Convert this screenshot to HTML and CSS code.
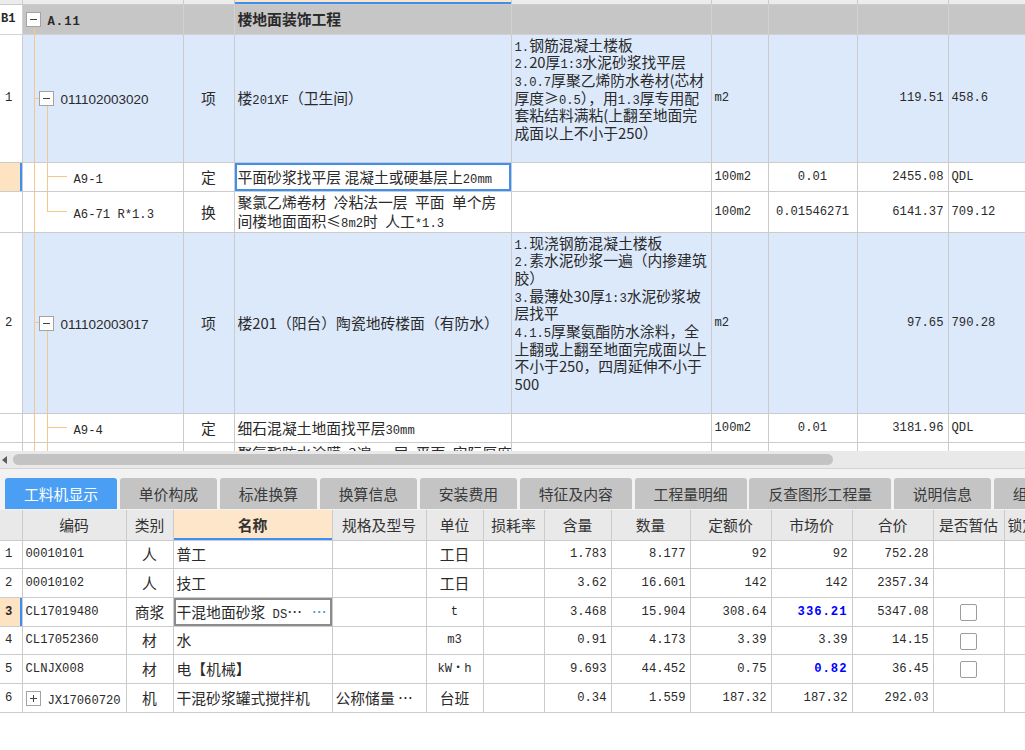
FILE: index.html
```html
<!DOCTYPE html>
<html lang="zh-CN">
<head>
<meta charset="utf-8">
<title>楼地面装饰工程</title>
<link rel="stylesheet" href="styles.css">
</head>
<body>
<div class="top">
<table class="grid tg">
<colgroup><col class="c1"><col class="c2"><col class="c3"><col class="c4"><col class="c5"><col class="c6"><col class="c7"><col class="c8"><col class="c9"><col class="c10"></colgroup>
<tr class="hdr"><td></td><td></td><td></td><td class="hsel"></td><td></td><td></td><td></td><td></td><td></td><td></td></tr>
<tr class="gray h30"><td class="num m b">B1</td><td class="code tb1"><span class="box"></span><span class="m b ls">A.11</span></td><td></td><td class="b">楼地面装饰工程</td><td></td><td></td><td></td><td></td><td></td><td></td></tr>
<tr class="blue h128"><td class="num m">1</td><td class="code titem"><span class="box"></span><span class="qd">011102003020</span></td><td class="c">项</td><td>楼<span class="m">201XF</span>（卫生间）</td><td class="feat"><span class="m">1.</span>钢筋混凝土楼板<br><span class="m">2.</span>20厚<span class="m">1:3</span>水泥砂浆找平层<br><span class="m">3.0.7</span>厚聚乙烯防水卷材(芯材<br>厚度≥<span class="m">0.5</span>），用<span class="m">1.3</span>厚专用配<br>套粘结料满粘(上翻至地面完<br>成面以上不小于250）</td><td class="m">m2</td><td></td><td class="m r">119.51</td><td class="m">458.6</td><td></td></tr>
<tr class="h29"><td class="num selnum"></td><td class="code tchild"><span class="m">A9-1</span></td><td class="c">定</td><td class="selcell">平面砂浆找平层 混凝土或硬基层上<span class="m">20mm</span></td><td></td><td class="m">100m2</td><td class="m c">0.01</td><td class="m r">2455.08</td><td class="m">QDL</td><td></td></tr>
<tr class="h41"><td class="num"></td><td class="code tlast"><span class="m">A6-71 R*1.3</span></td><td class="c">换</td><td class="two">聚氯乙烯卷材<span class="m"> </span>冷粘法一层<span class="m"> </span>平面<span class="m">  </span>单个房<br>间楼地面面积≤<span class="m">8m2</span>时<span class="m"> </span>人工<span class="m">*1.3</span></td><td></td><td class="m">100m2</td><td class="m c">0.01546271</td><td class="m r">6141.37</td><td class="m">709.12</td><td></td></tr>
<tr class="blue h181"><td class="num m">2</td><td class="code titem"><span class="box"></span><span class="qd">011102003017</span></td><td class="c">项</td><td>楼201（阳台）陶瓷地砖楼面（有防水）</td><td class="feat"><span class="m">1.</span>现浇钢筋混凝土楼板<br><span class="m">2.</span>素水泥砂浆一遍（内掺建筑<br>胶）<br><span class="m">3.</span>最薄处30厚<span class="m">1:3</span>水泥砂浆坡<br>层找平<br><span class="m">4.1.5</span>厚聚氨酯防水涂料，全<br>上翻或上翻至地面完成面以上<br>不小于250，四周延伸不小于<br>500</td><td class="m">m2</td><td></td><td class="m r">97.65</td><td class="m">790.28</td><td></td></tr>
<tr class="h29"><td class="num"></td><td class="code tchild"><span class="m">A9-4</span></td><td class="c">定</td><td>细石混凝土地面找平层<span class="m">30mm</span></td><td></td><td class="m">100m2</td><td class="m c">0.01</td><td class="m r">3181.96</td><td class="m">QDL</td><td></td></tr>
<tr class="h41"><td class="num"></td><td class="code tchild"><span class="m">A6-25 + A6-27</span></td><td class="c">换</td><td class="two">聚氨酯防水涂膜<span class="m"> </span>2遍<span class="m"> </span>一层<span class="m"> </span>平面<span class="m">  </span>实际厚度<br><span class="m">1.5mm</span></td><td></td><td class="m">100m2</td><td class="m c">0.01</td><td class="m r">4215.66</td><td class="m">QDL</td><td></td></tr>
</table>
</div>

<div class="hscroll"><span class="arrow"></span><span class="thumb"></span></div>

<div class="tabs">
<div class="tab on">工料机显示</div>
<div class="tab">单价构成</div>
<div class="tab">标准换算</div>
<div class="tab">换算信息</div>
<div class="tab">安装费用</div>
<div class="tab">特征及内容</div>
<div class="tab">工程量明细</div>
<div class="tab">反查图形工程量</div>
<div class="tab">说明信息</div>
<div class="tab">组价方案</div>
</div>

<div class="bottom">
<table class="grid bt">
<colgroup><col class="d1"><col class="d2"><col class="d3"><col class="d4"><col class="d5"><col class="d6"><col class="d7"><col class="d8"><col class="d9"><col class="d10"><col class="d11"><col class="d12"><col class="d13"><col class="d14"></colgroup>
<tr class="bh"><td></td><td>编码</td><td>类别</td><td class="hname">名称</td><td>规格及型号</td><td>单位</td><td>损耗率</td><td>含量</td><td>数量</td><td>定额价</td><td>市场价</td><td>合价</td><td>是否暂估</td><td class="l">锁定数量</td></tr>
<tr class="h28"><td class="num m">1</td><td class="m">00010101</td><td class="c">人</td><td>普工</td><td></td><td class="c">工日</td><td></td><td class="m r">1.783</td><td class="m r">8.177</td><td class="m r">92</td><td class="m r">92</td><td class="m r">752.28</td><td></td><td></td></tr>
<tr class="h29"><td class="num m">2</td><td class="m">00010102</td><td class="c">人</td><td>技工</td><td></td><td class="c">工日</td><td></td><td class="m r">3.62</td><td class="m r">16.601</td><td class="m r">142</td><td class="m r">142</td><td class="m r">2357.34</td><td></td><td></td></tr>
<tr class="h29"><td class="num m selnum b">3</td><td class="m">CL17019480</td><td class="c">商浆</td><td class="editcell"><span class="more">…</span>干混地面砂浆<span class="m"> DS</span>…</td><td></td><td class="m c">t</td><td></td><td class="m r">3.468</td><td class="m r">15.904</td><td class="m r">308.64</td><td class="m r hi">336.21</td><td class="m r">5347.08</td><td class="c"><span class="chk"></span></td><td></td></tr>
<tr class="h28"><td class="num m">4</td><td class="m">CL17052360</td><td class="c">材</td><td>水</td><td></td><td class="m c">m3</td><td></td><td class="m r">0.91</td><td class="m r">4.173</td><td class="m r">3.39</td><td class="m r">3.39</td><td class="m r">14.15</td><td class="c"><span class="chk"></span></td><td></td></tr>
<tr class="h29"><td class="num m">5</td><td class="m">CLNJX008</td><td class="c">材</td><td>电【机械】</td><td></td><td class="m c">kW・h</td><td></td><td class="m r">9.693</td><td class="m r">44.452</td><td class="m r">0.75</td><td class="m r hi">0.82</td><td class="m r">36.45</td><td class="c"><span class="chk"></span></td><td></td></tr>
<tr class="h29"><td class="num m">6</td><td class="code"><span class="box plus"></span><span class="m">JX17060720</span></td><td class="c">机</td><td>干混砂浆罐式搅拌机</td><td>公称储量 …</td><td class="c">台班</td><td></td><td class="m r">0.34</td><td class="m r">1.559</td><td class="m r">187.32</td><td class="m r">187.32</td><td class="m r">292.03</td><td></td><td></td></tr>
</table>
</div>
</body>
</html>
```

FILE: styles.css
```css
* { box-sizing: border-box; }
html, body { margin: 0; padding: 0; }
body {
  width: 1025px;
  height: 750px;
  overflow: hidden;
  background: #fff;
  font-family: "Noto Sans CJK SC", "Noto Sans", sans-serif;
  font-size: 14.8px;
  color: #2a2a2a;
}
.m { font-family: "Liberation Mono", "Noto Sans CJK SC", monospace; font-size: 12.2px; }
.b { font-weight: bold; }
.ls { letter-spacing: 1px; }
.qd { font-family: "Liberation Sans", "Noto Sans", sans-serif; font-size: 13.5px; }
.grid td span.m, .grid td span.qd { line-height: 0; }

/* ---------- grids ---------- */
.top { height: 451px; overflow: hidden; width: 1025px; }
.bottom { width: 1025px; overflow: hidden; }
table.grid { border-collapse: collapse; table-layout: fixed; }
.grid td {
  border: 1px solid #cbcbcb;
  padding: 0 3px;
  white-space: nowrap;
  overflow: hidden;
  vertical-align: middle;
  line-height: 18px;
}
.grid tr > td:first-child { border-left: 0; }
.grid td.c { text-align: center; }
.grid td.r { text-align: right; padding-right: 4px; }
.grid td.num { padding-left: 5px; background-color: #fff; }

.tg { width: 1065px; }
.tg .c1 { width: 22px; } .tg .c2 { width: 161px; } .tg .c3 { width: 51px; }
.tg .c4 { width: 277px; } .tg .c5 { width: 200px; } .tg .c6 { width: 57px; }
.tg .c7 { width: 89px; } .tg .c8 { width: 91px; } .tg .c9 { width: 77px; }
.tg .c10 { width: 40px; }

.tg tr.hdr { height: 4px; }
.tg tr.hdr td { background: #ececec; border-top: 0; padding: 0; line-height: 0; font-size: 0; }
.tg tr.hdr td.hsel { background: #fde6c8; box-shadow: inset 0 -2px 0 #3d8ff2; }

tr.h28 { height: 28px; }
tr.h29 { height: 29px; }
tr.h30 { height: 30px; }
tr.h41 { height: 41px; }
tr.h128 { height: 128px; }
tr.h181 { height: 181px; }

.grid tr.gray td { background-color: #c6c6c6; border-color: #d2d2d2; }
.grid tr.blue td { background-color: #dce9fb; }
.grid tr.gray td.num, .grid tr.blue td.num { background-color: #fff; }
.tg tr.gray td.num { padding-left: 1px; }

.feat { vertical-align: top !important; padding-top: 1px !important; line-height: 17.7px !important; }
.two { line-height: 18.3px !important; }

.selnum { background-color: #fde3c2 !important; box-shadow: inset -2px 0 0 #3d8ff2; }
.selcell { box-shadow: inset 0 0 0 2px #3d8ff2; }

/* ---------- tree ---------- */
.code { --tl: #f6c78a; }
.tg td.code { background-repeat: no-repeat; }
.tg td.tb1 {
  background-image: linear-gradient(var(--tl), var(--tl));
  background-position: 11px 100%;
  background-size: 1px calc(50% - 7px);
  padding-left: 3px;
}
.tg td.titem {
  background-image: linear-gradient(var(--tl), var(--tl)), linear-gradient(var(--tl), var(--tl)), linear-gradient(var(--tl), var(--tl));
  background-position: 11px 0, 11px 50%, 24px 100%;
  background-size: 1px 100%, 5px 1px, 1px calc(50% - 7px);
  padding-left: 16px;
}
.tg td.tchild {
  background-image: linear-gradient(var(--tl), var(--tl)), linear-gradient(var(--tl), var(--tl)), linear-gradient(var(--tl), var(--tl));
  background-position: 11px 0, 24px 0, 24px 50%;
  background-size: 1px 100%, 1px 100%, 20px 1px;
  padding-left: 51px;
}
.tg td.tlast {
  background-image: linear-gradient(var(--tl), var(--tl)), linear-gradient(var(--tl), var(--tl)), linear-gradient(var(--tl), var(--tl));
  background-position: 11px 0, 24px 0, 24px 50%;
  background-size: 1px 100%, 1px 50%, 20px 1px;
  padding-left: 51px;
}
.box {
  display: inline-block;
  width: 15px;
  height: 15px;
  border: 1px solid #a3a3a3;
  vertical-align: middle;
  margin: -2px 7px 0 0;
  background: linear-gradient(#444, #444) center / 7px 1px no-repeat, #fff;
}
.box.plus {
  background: linear-gradient(#444, #444) center / 7px 1px no-repeat, linear-gradient(#444, #444) center / 1px 7px no-repeat, #fff;
}

/* ---------- horizontal scrollbar ---------- */
.hscroll {
  display: flex;
  align-items: center;
  height: 18px;
  background: #e9e9e9;
  padding-left: 2px;
  border-bottom: 1px solid #d4d4d4;
}
.arrow {
  width: 0; height: 0;
  border-top: 4px solid transparent;
  border-bottom: 4px solid transparent;
  border-right: 5px solid #5c5c5c;
}
.thumb {
  width: 820px;
  height: 11px;
  margin-left: 6px;
  border-radius: 6px;
  background: #c3c3c3;
}

/* ---------- tabs ---------- */
.tabs {
  display: flex;
  gap: 2.8px;
  height: 41px;
  padding: 9px 0 0 5px;
  background: #f2f2f2;
  overflow: hidden;
}
.tab {
  flex: none;
  height: 31px;
  line-height: 31px;
  padding: 0 19px;
  background: #c4c4c4;
  color: #3a3a3a;
  border-radius: 3px 3px 0 0;
  white-space: nowrap;
}
.tab.on { background: #4a9ff5; color: #fff; }

/* ---------- bottom grid ---------- */
.bt { width: 1045px; }
.bt .d1 { width: 22px; } .bt .d2 { width: 104px; } .bt .d3 { width: 47px; }
.bt .d4 { width: 159px; } .bt .d5 { width: 94px; } .bt .d6 { width: 57px; }
.bt .d7 { width: 61px; } .bt .d8 { width: 67px; } .bt .d9 { width: 79px; }
.bt .d10 { width: 81px; } .bt .d11 { width: 81px; } .bt .d12 { width: 81px; }
.bt .d13 { width: 71px; } .bt .d14 { width: 41px; }
.bt tr.bh { height: 30px; }
.bt tr.bh td { background: #e9e9e9; text-align: center; color: #333; border-top: 0; }
.bt tr.bh td.l { text-align: left; }
.bt tr.bh td.hname { background: #fde6c9; font-weight: bold; box-shadow: inset 0 -2px 0 #3d8ff2; }
.bt td.code { padding-left: 3px; }
.editcell { box-shadow: inset 0 0 0 2px #8c8c8c; }
.more { float: right; color: #4a90e2; margin-right: 2px; }
.hi { color: #0000ff; font-weight: bold; letter-spacing: 1px; }
.chk {
  display: inline-block;
  width: 17px;
  height: 17px;
  border: 1px solid #9c9c9c;
  border-radius: 2px;
  background: #fff;
  vertical-align: middle;
}
```
